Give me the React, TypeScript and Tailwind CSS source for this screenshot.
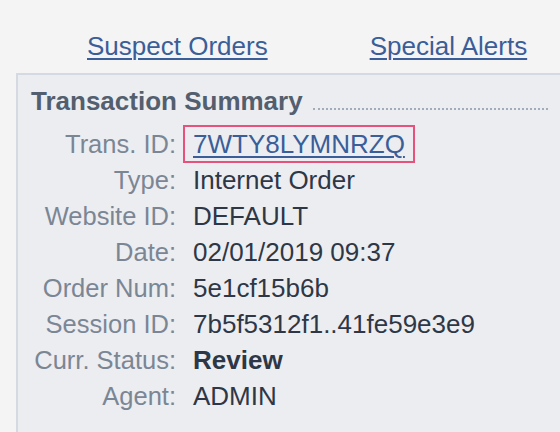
const rows: { label: string; value: string; kind?: "link" | "bold" }[] = [
  { label: "Trans. ID:", value: "7WTY8LYMNRZQ", kind: "link" },
  { label: "Type:", value: "Internet Order" },
  { label: "Website ID:", value: "DEFAULT" },
  { label: "Date:", value: "02/01/2019 09:37" },
  { label: "Order Num:", value: "5e1cf15b6b" },
  { label: "Session ID:", value: "7b5f5312f1..41fe59e3e9" },
  { label: "Curr. Status:", value: "Review", kind: "bold" },
  { label: "Agent:", value: "ADMIN" },
]

export default function App() {
  return (
    <div
      className="w-[560px] h-[432px] overflow-hidden bg-[#f4f4f5]"
      style={{ fontFamily: '"Liberation Sans", Arial, sans-serif' }}
    >
      <nav className="flex gap-[102px] pl-[87px] pt-[31px] text-[26px] leading-[30px]">
        <a href="#" className="text-[#3a5e98] underline decoration-[1.5px] underline-offset-[3px]">
          Suspect Orders
        </a>
        <a href="#" className="text-[#3a5e98] underline decoration-[1.5px] underline-offset-[3px]">
          Special Alerts
        </a>
      </nav>

      <section className="mt-3 ml-4 w-[560px] border-t-2 border-l-2 border-[#d4d9e2] bg-[#ecedf1] pl-[13px] pr-[28px] pt-[11px] pb-8">
        <div className="flex items-end gap-[10px]">
          <h2 className="text-[26px] leading-[30px] font-bold text-[#535f6e] whitespace-nowrap">
            Transaction Summary
          </h2>
          <div className="flex-1 mb-[6px] border-b-2 border-dotted border-[#a3adba]" />
        </div>

        <dl className="mt-[10px] grid grid-cols-[145px_1fr] gap-x-[17px] text-[26px] leading-[36px]">
          {rows.map((row) => (
            <div key={row.label} className="contents">
              <dt className="text-right text-[25.5px] text-[#7b8695] whitespace-nowrap">{row.label}</dt>
              <dd className="text-[#2e3746] whitespace-nowrap">
                {row.kind === "link" ? (
                  <span className="inline-block -ml-[10px] -my-px border-2 border-[#e6527b] px-[8px] leading-[34px]">
                    <a href="#" className="text-[#3a5e98] underline decoration-[1.5px] underline-offset-[3px]">
                      {row.value}
                    </a>
                  </span>
                ) : row.kind === "bold" ? (
                  <span className="font-bold">{row.value}</span>
                ) : (
                  row.value
                )}
              </dd>
            </div>
          ))}
        </dl>
      </section>
    </div>
  )
}
